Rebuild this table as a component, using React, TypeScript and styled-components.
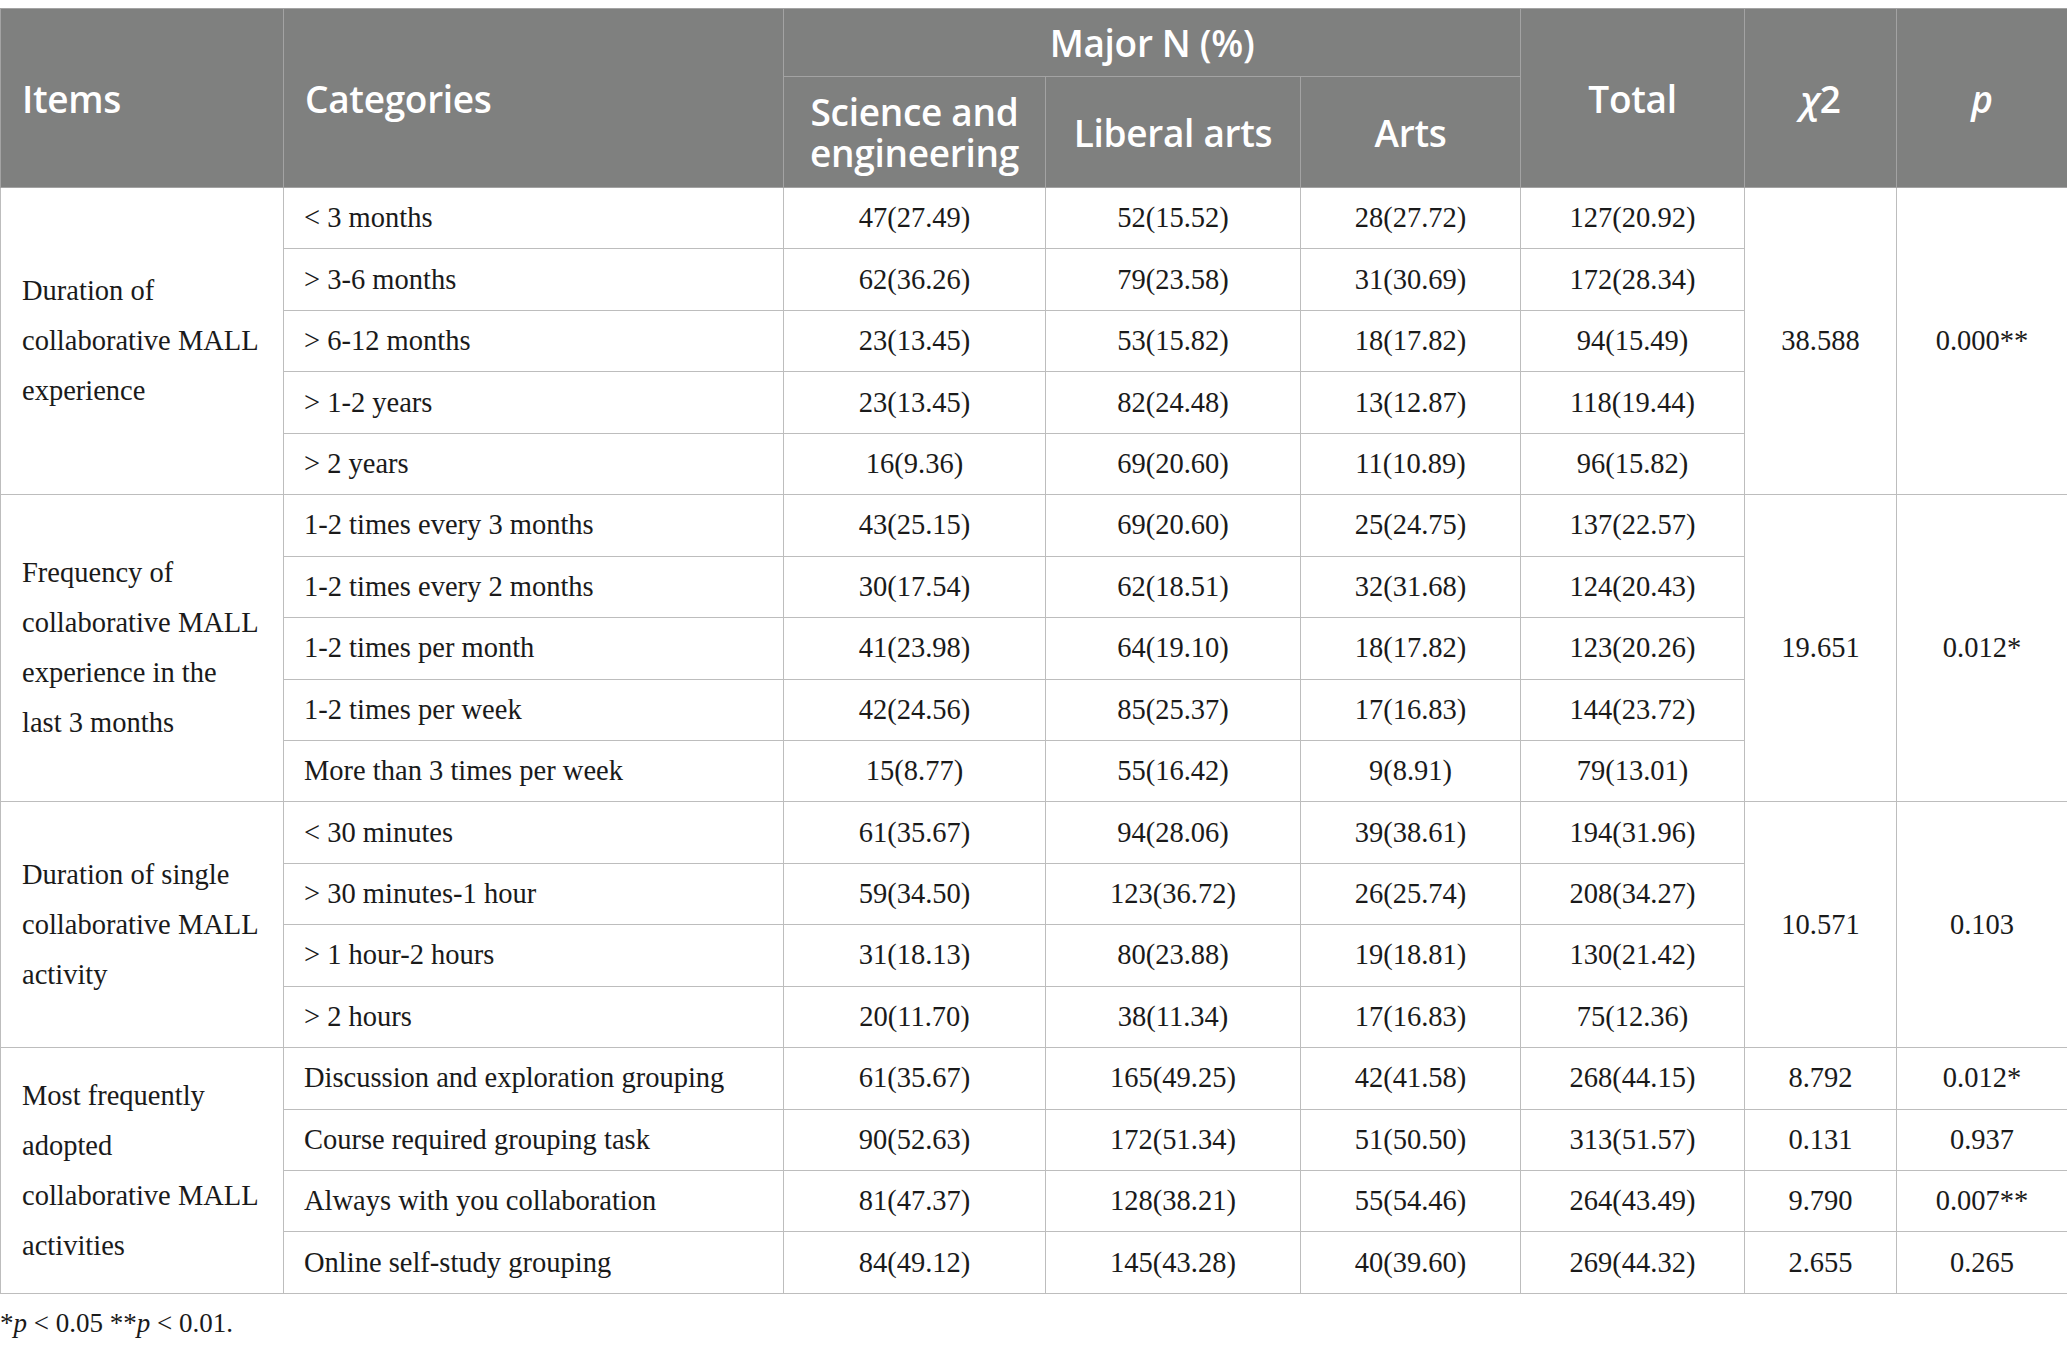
import { styled, createGlobalStyle } from "styled-components";

const GlobalStyle = createGlobalStyle`
  html, body {
    margin: 0;
    padding: 0;
    background: #ffffff;
  }
`;

const HEADER_BG = "#7f807f";
const HEADER_LINE = "#a3a3a3";
const BODY_LINE = "#bdbdbd";

const Page = styled.div`
  padding-top: 8px;
  width: 2067px;
`;

const Table = styled.table`
  width: 2067px;
  table-layout: fixed;
  border-collapse: collapse;
  font-family: "Liberation Serif", "Times New Roman", serif;
  font-size: 28.5px;
  color: #1a1a1a;
`;

const HeadCell = styled.th<{ $align?: "left" | "center"; $italic?: boolean }>`
  background: ${HEADER_BG};
  color: #ffffff;
  font-family: "Open Sans", "Noto Sans", sans-serif;
  font-weight: 600;
  font-size: 37px;
  line-height: 41px;
  letter-spacing: -0.3px;
  font-style: ${({ $italic }) => ($italic ? "italic" : "normal")};
  text-align: ${({ $align }) => $align || "center"};
  padding: 0;
  padding-left: ${({ $align }) => ($align === "left" ? "21px" : "0")};
  border: 1px solid ${HEADER_LINE};
  vertical-align: middle;
`;

const HeadRow = styled.tr<{ $h: number }>`
  height: ${({ $h }) => $h}px;
`;

const BodyRow = styled.tr`
  height: 61.45px;
`;

const GroupCell = styled.td`
  text-align: left;
  padding-left: 21px;
  padding-right: 6px;
  line-height: 50px;
  border: 1px solid ${BODY_LINE};
  vertical-align: middle;
`;

const CategoryCell = styled.td`
  text-align: left;
  padding-left: 20px;
  border: 1px solid ${BODY_LINE};
  vertical-align: middle;
  white-space: nowrap;
`;

const NumCell = styled.td`
  text-align: center;
  border: 1px solid ${BODY_LINE};
  vertical-align: middle;
  white-space: nowrap;
`;

const Note = styled.p`
  margin: 14px 0 0 0;
  font-family: "Liberation Serif", "Times New Roman", serif;
  font-size: 27px;
  color: #1a1a1a;
`;

type Row = {
  category: string;
  values: [string, string, string, string];
};

type Group = {
  label: string[];
  rows: Row[];
  stats: { chi: string; p: string }[];
};

const groups: Group[] = [
  {
    label: ["Duration of", "collaborative MALL", "experience"],
    rows: [
      { category: "< 3 months", values: ["47(27.49)", "52(15.52)", "28(27.72)", "127(20.92)"] },
      { category: "> 3-6 months", values: ["62(36.26)", "79(23.58)", "31(30.69)", "172(28.34)"] },
      { category: "> 6-12 months", values: ["23(13.45)", "53(15.82)", "18(17.82)", "94(15.49)"] },
      { category: "> 1-2 years", values: ["23(13.45)", "82(24.48)", "13(12.87)", "118(19.44)"] },
      { category: "> 2 years", values: ["16(9.36)", "69(20.60)", "11(10.89)", "96(15.82)"] },
    ],
    stats: [{ chi: "38.588", p: "0.000**" }],
  },
  {
    label: ["Frequency of", "collaborative MALL", "experience in the", "last 3 months"],
    rows: [
      { category: "1-2 times every 3 months", values: ["43(25.15)", "69(20.60)", "25(24.75)", "137(22.57)"] },
      { category: "1-2 times every 2 months", values: ["30(17.54)", "62(18.51)", "32(31.68)", "124(20.43)"] },
      { category: "1-2 times per month", values: ["41(23.98)", "64(19.10)", "18(17.82)", "123(20.26)"] },
      { category: "1-2 times per week", values: ["42(24.56)", "85(25.37)", "17(16.83)", "144(23.72)"] },
      { category: "More than 3 times per week", values: ["15(8.77)", "55(16.42)", "9(8.91)", "79(13.01)"] },
    ],
    stats: [{ chi: "19.651", p: "0.012*" }],
  },
  {
    label: ["Duration of single", "collaborative MALL", "activity"],
    rows: [
      { category: "< 30 minutes", values: ["61(35.67)", "94(28.06)", "39(38.61)", "194(31.96)"] },
      { category: "> 30 minutes-1 hour", values: ["59(34.50)", "123(36.72)", "26(25.74)", "208(34.27)"] },
      { category: "> 1 hour-2 hours", values: ["31(18.13)", "80(23.88)", "19(18.81)", "130(21.42)"] },
      { category: "> 2 hours", values: ["20(11.70)", "38(11.34)", "17(16.83)", "75(12.36)"] },
    ],
    stats: [{ chi: "10.571", p: "0.103" }],
  },
  {
    label: ["Most frequently", "adopted", "collaborative MALL", "activities"],
    rows: [
      { category: "Discussion and exploration grouping", values: ["61(35.67)", "165(49.25)", "42(41.58)", "268(44.15)"] },
      { category: "Course required grouping task", values: ["90(52.63)", "172(51.34)", "51(50.50)", "313(51.57)"] },
      { category: "Always with you collaboration", values: ["81(47.37)", "128(38.21)", "55(54.46)", "264(43.49)"] },
      { category: "Online self-study grouping", values: ["84(49.12)", "145(43.28)", "40(39.60)", "269(44.32)"] },
    ],
    stats: [
      { chi: "8.792", p: "0.012*" },
      { chi: "0.131", p: "0.937" },
      { chi: "9.790", p: "0.007**" },
      { chi: "2.655", p: "0.265" },
    ],
  },
];

const columnWidths = [283, 500, 262, 255, 220, 224, 152, 171];

const GroupRows = ({ group }: { group: Group }) => {
  const span = group.rows.length;
  const merged = group.stats.length === 1;
  return (
    <>
      {group.rows.map((row, i) => (
        <BodyRow key={row.category}>
          {i === 0 && (
            <GroupCell rowSpan={span}>
              {group.label.map((line) => (
                <div key={line}>{line}</div>
              ))}
            </GroupCell>
          )}
          <CategoryCell>{row.category}</CategoryCell>
          {row.values.map((v, j) => (
            <NumCell key={j}>{v}</NumCell>
          ))}
          {merged ? (
            i === 0 && (
              <>
                <NumCell rowSpan={span}>{group.stats[0].chi}</NumCell>
                <NumCell rowSpan={span}>{group.stats[0].p}</NumCell>
              </>
            )
          ) : (
            <>
              <NumCell>{group.stats[i].chi}</NumCell>
              <NumCell>{group.stats[i].p}</NumCell>
            </>
          )}
        </BodyRow>
      ))}
    </>
  );
};

const App = () => {
  return (
    <Page>
      <GlobalStyle />
      <Table>
        <colgroup>
          {columnWidths.map((w, i) => (
            <col key={i} style={{ width: w }} />
          ))}
        </colgroup>
        <thead>
          <HeadRow $h={68}>
            <HeadCell rowSpan={2} $align="left">Items</HeadCell>
            <HeadCell rowSpan={2} $align="left">Categories</HeadCell>
            <HeadCell colSpan={3}>Major N (%)</HeadCell>
            <HeadCell rowSpan={2}>Total</HeadCell>
            <HeadCell rowSpan={2} $italic>
              χ<span style={{ fontStyle: "normal" }}>2</span>
            </HeadCell>
            <HeadCell rowSpan={2} $italic>p</HeadCell>
          </HeadRow>
          <HeadRow $h={111}>
            <HeadCell>
              Science and
              <br />
              engineering
            </HeadCell>
            <HeadCell>Liberal arts</HeadCell>
            <HeadCell>Arts</HeadCell>
          </HeadRow>
        </thead>
        <tbody>
          {groups.map((g) => (
            <GroupRows key={g.label.join(" ")} group={g} />
          ))}
        </tbody>
      </Table>
      <Note>
        *<i>p</i> &lt; 0.05 **<i>p</i> &lt; 0.01.
      </Note>
    </Page>
  );
};

export default App;
